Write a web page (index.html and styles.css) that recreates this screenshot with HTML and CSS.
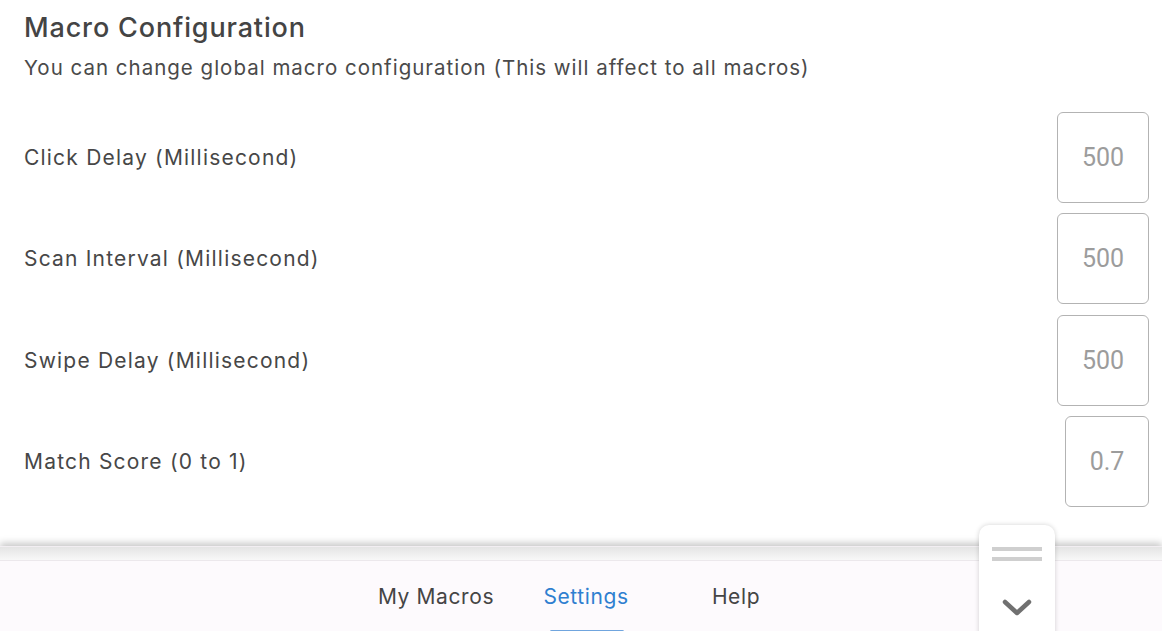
FILE: index.html
```html
<!DOCTYPE html>
<html lang="en">
<head>
  <meta charset="UTF-8">
  <meta name="viewport" content="width=device-width, initial-scale=1.0">
  <title>Macro Configuration</title>
  <link rel="stylesheet" href="styles.css">
</head>
<body>

  <div class="page">
    <div class="content">
      <h1 class="title">Macro Configuration</h1>
      <p class="subtitle">You can change global macro configuration (This will affect to all macros)</p>

      <div class="setting-row">
        <label for="clickDelay">Click Delay (Millisecond)</label>
        <input type="text" id="clickDelay" placeholder="500" />
      </div>
      <div class="setting-row">
        <label for="scanInterval">Scan Interval (Millisecond)</label>
        <input type="text" id="scanInterval" placeholder="500" />
      </div>
      <div class="setting-row">
        <label for="swipeDelay">Swipe Delay (Millisecond)</label>
        <input type="text" id="swipeDelay" placeholder="500" />
      </div>
      <div class="setting-row">
        <label for="matchScore">Match Score (0 to 1)</label>
        <input type="text" id="matchScore" class="narrow" placeholder="0.7" />
      </div>
    </div>

    <nav class="tab-bar">
      <a class="tab">My Macros</a>
      <a class="tab active">Settings</a>
      <a class="tab">Help</a>
    </nav>

    <!-- floating drawer handle -->
    <div class="handle">
      <div class="handle-bars">
        <span></span>
        <span></span>
      </div>
      <svg class="chevron" width="30" height="18" viewBox="0 0 30 18">
        <path d="M3 3 L15 14 L27 3" fill="none" stroke="#707070" stroke-width="4.5" stroke-linecap="round" stroke-linejoin="round"/>
      </svg>
    </div>
  </div>

</body>
</html>
```

FILE: styles.css
```css
html, body {
  margin: 0;
  padding: 0;
}
body {
  font-family: Inter, "Noto Sans", sans-serif;
  color: #454545;
  background: #fff;
}
.page {
  position: relative;
  height: 631px;
  display: flex;
  flex-direction: column;
  overflow: hidden;
}
.content {
  flex: 1;
  padding: 10px 13px 0 24px;
}
.title {
  margin: 0;
  font-size: 27px;
  font-weight: 500;
  line-height: 36px;
  color: #444;
  letter-spacing: 0.85px;
}
.subtitle {
  margin: 8px 0 0;
  font-size: 20.5px;
  line-height: 28px;
  color: #4a4a4a;
  letter-spacing: 1px;
}
.setting-row {
  display: flex;
  align-items: center;
  justify-content: space-between;
  height: 101.3px;
}
.setting-row:first-of-type {
  margin-top: 25px;
}
.setting-row label {
  font-size: 21px;
  color: #474747;
  letter-spacing: 1.2px;
}
.setting-row input {
  width: 92px;
  height: 91px;
  box-sizing: border-box;
  border: 1.5px solid #b3b3b3;
  border-radius: 6px;
  text-align: center;
  font-family: Roboto, sans-serif;
  font-size: 25px;
  color: #999;
  outline: none;
  padding: 0;
  background: #fff;
}
.setting-row input::placeholder {
  color: #9c9c9c;
}
.setting-row input.narrow {
  width: 84px;
}
.tab-bar {
  height: 85px;
  background: #fdfafd;
  display: flex;
  justify-content: center;
  align-items: center;
  padding: 14px 0 0 10px;
  box-sizing: border-box;
  box-shadow: 0 -3px 7px rgba(0, 0, 0, 0.22);
  border-top: 1px solid #f2eef2;
  position: relative;
}
.tab-bar::before {
  content: "";
  position: absolute;
  left: 0;
  right: 0;
  top: 0;
  height: 13px;
  background: linear-gradient(#e4e4e4, #f8f8f8);
  border-bottom: 1px solid #ece8ec;
}
.tab {
  width: 150px;
  height: 71px;
  display: flex;
  align-items: center;
  justify-content: center;
  font-size: 21px;
  color: #454545;
  position: relative;
  letter-spacing: 0.6px;
}
.tab.active {
  color: #2f7fd0;
}
.tab.active::after {
  content: "";
  position: absolute;
  bottom: -1px;
  left: 39px;
  width: 74px;
  height: 3px;
  border-radius: 2px;
  background: #70a5de;
}
.handle {
  position: absolute;
  left: 979px;
  top: 525px;
  width: 76px;
  height: 120px;
  background: #fff;
  border-radius: 10px;
  box-shadow: 0 0 5px rgba(0, 0, 0, 0.18);
  display: flex;
  flex-direction: column;
  align-items: center;
}
.handle-bars {
  margin-top: 22px;
  display: flex;
  flex-direction: column;
  gap: 6px;
}
.handle-bars span {
  display: block;
  width: 50px;
  height: 4px;
  background: #cfcfcf;
}
.chevron {
  margin-top: 38px;
}
```
